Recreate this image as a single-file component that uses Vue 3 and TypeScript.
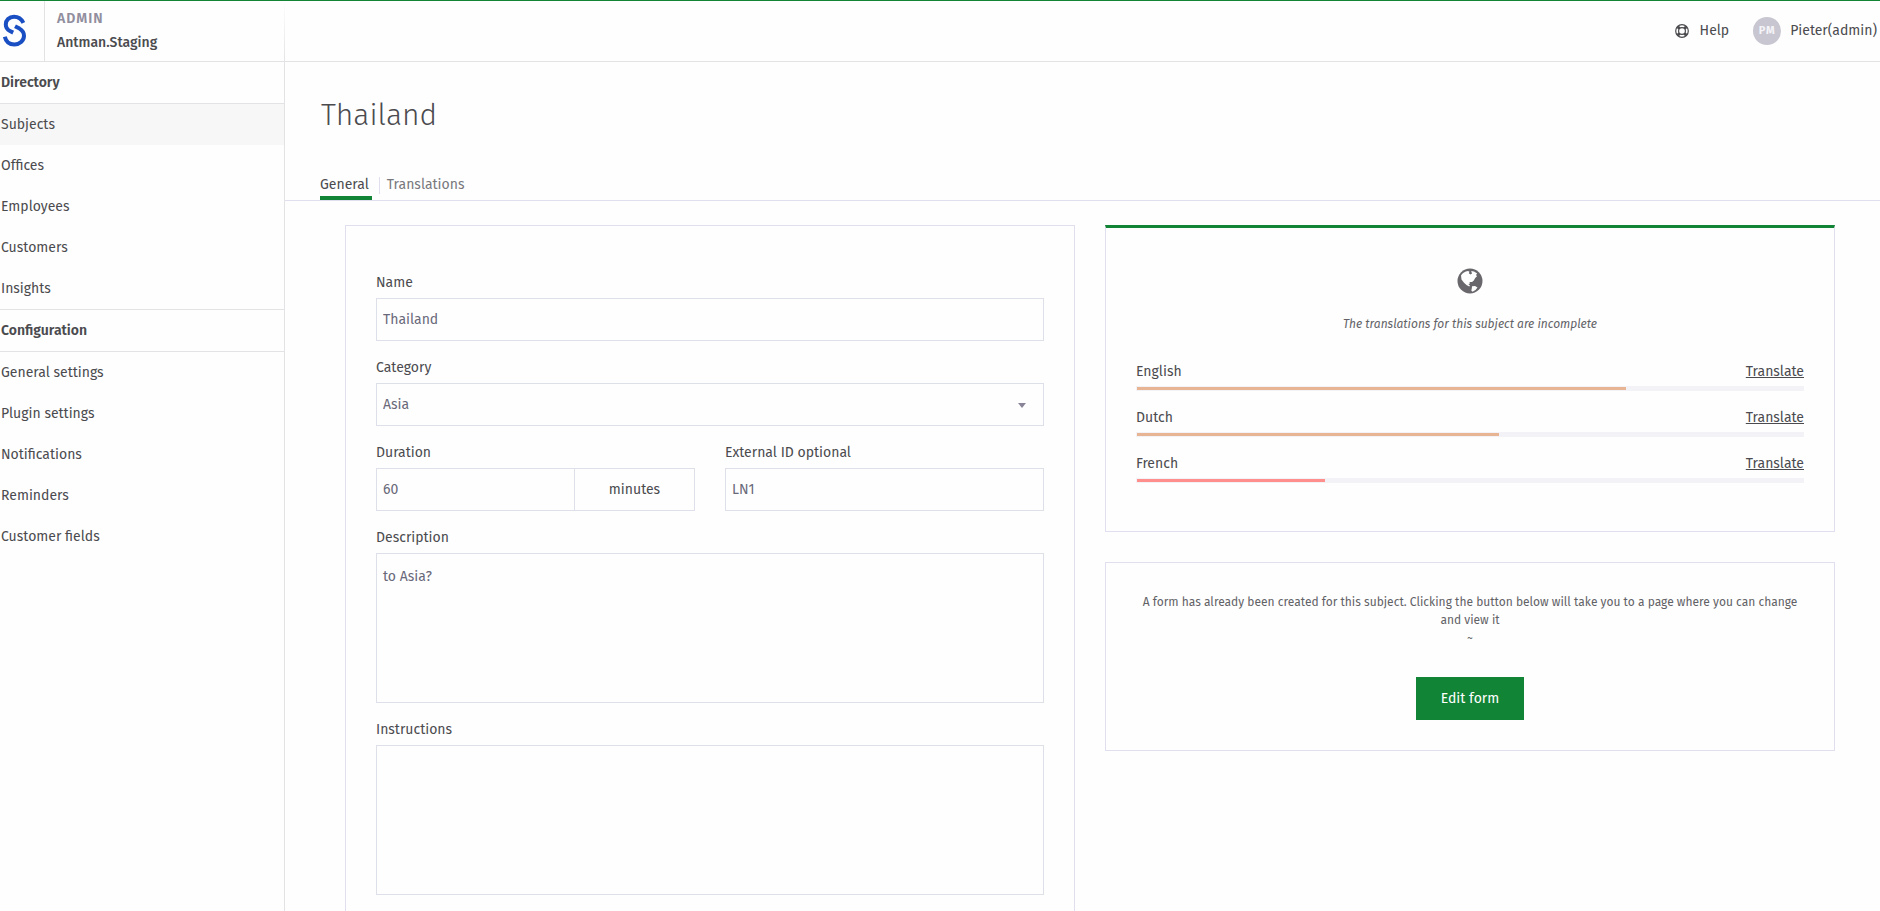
<script setup lang="ts">
import { ref } from 'vue'

interface Section {
  title: string
  items: string[]
}
interface Language {
  name: string
  progress: number
  level: 'medium' | 'low'
}

const sections: Section[] = [
  { title: 'Directory', items: ['Subjects', 'Offices', 'Employees', 'Customers', 'Insights'] },
  {
    title: 'Configuration',
    items: ['General settings', 'Plugin settings', 'Notifications', 'Reminders', 'Customer fields'],
  },
]
const languages: Language[] = [
  { name: 'English', progress: 73.4, level: 'medium' },
  { name: 'Dutch', progress: 54.4, level: 'medium' },
  { name: 'French', progress: 28.3, level: 'low' },
]

const active = ref('Subjects')
const name = ref('Thailand')
const category = ref('Asia')
const duration = ref('60')
const externalId = ref('LN1')
const description = ref('to Asia?')
const instructions = ref('')
</script>

<template>
  <div class="app">
    <header class="topbar">
      <div class="brand">
        <a href="#" class="logo" aria-label="Home">
          <svg width="28" height="34" viewBox="0 0 28 34" fill="none" stroke="#1a4fc4" stroke-width="4">
            <path d="M23.400 8.800C21.500 5 18 2.700 14 2.700C9 2.700 5.800 6.200 5.800 10.400C5.800 13.400 7.400 15.600 10 17L13.200 18.600" />
            <path d="M15 12.200L19.500 14.600C22.700 16.500 24 18.800 24 21.800C24 26.800 19.600 30.500 14.300 30.500C9.600 30.500 6 27.800 4.800 22.800" />
          </svg>
        </a>
        <div class="account">
          <span class="role">ADMIN</span>
          <span class="company">Antman.Staging</span>
        </div>
      </div>
      <nav class="user-nav" aria-label="User">
        <a href="#" class="help">
          <svg width="14" height="14" viewBox="0 0 14 14" fill="none" stroke="#4b4b4f">
            <circle cx="7" cy="7" r="6.300" stroke-width="1.200" />
            <circle cx="7" cy="7" r="3.400" stroke-width="1.200" />
            <path d="M2.700 2.700L4.500 4.500M11.300 2.700L9.500 4.500M2.700 11.300L4.500 9.500M11.300 11.300L9.500 9.500" stroke-width="3" />
          </svg>
          Help
        </a>
        <a href="#" class="profile"><span class="avatar">PM</span>Pieter(admin)</a>
      </nav>
    </header>

    <div class="body">
      <nav class="sidebar" aria-label="Main">
        <section v-for="s in sections" :key="s.title" class="group">
          <h2>{{ s.title }}</h2>
          <a
            v-for="item in s.items"
            :key="item"
            href="#"
            :class="{ active: item === active }"
            @click.prevent="active = item"
            >{{ item }}</a
          >
        </section>
      </nav>

      <main class="main">
        <h1>Thailand</h1>
        <nav class="tabs" aria-label="Subject">
          <a href="#" class="tab current">General</a>
          <a href="#" class="tab">Translations</a>
        </nav>

        <div class="columns">
          <form class="card" @submit.prevent>
            <div class="field">
              <label for="name">Name</label>
              <input id="name" v-model="name" type="text" />
            </div>
            <div class="field">
              <label for="category">Category</label>
              <div class="select">
                <select id="category" v-model="category">
                  <option>Asia</option>
                </select>
                <svg class="caret" width="8" height="5" viewBox="0 0 8 5"><path d="M0 0H8L4 5Z" fill="#8a8499" /></svg>
              </div>
            </div>
            <div class="pair">
              <div class="field">
                <label for="duration">Duration</label>
                <div class="addon">
                  <input id="duration" v-model="duration" type="text" />
                  <span class="unit">minutes</span>
                </div>
              </div>
              <div class="field">
                <label for="external">External ID optional</label>
                <input id="external" v-model="externalId" type="text" />
              </div>
            </div>
            <div class="field">
              <label for="description">Description</label>
              <textarea id="description" v-model="description"></textarea>
            </div>
            <div class="field">
              <label for="instructions">Instructions</label>
              <textarea id="instructions" v-model="instructions"></textarea>
            </div>
          </form>

          <div class="side">
            <section class="card translations">
              <svg class="globe" width="26" height="26" viewBox="0 0 26 26">
                <circle cx="13" cy="13" r="12.500" fill="#69676c" />
                <path
                  d="M4 7.500C5.500 5 8 3.300 11 3L12.500 3.800L11.800 5.200L13.500 6.600L15 5.400L14.200 3L17 3.600L20.200 5.600L19 7L20 8.300L18.200 10L16.800 12.500L15 14L12.600 14L12.800 15.800L11.300 16L13 17.600L12.200 18.500L9.500 17L7 14.800L4.500 11.500Z"
                  fill="#fefefe"
                />
                <path d="M15 18.300L18 17.900L20.500 19.500L18.500 22L15.500 23.800L14.300 22.500L14.800 20.500Z" fill="#fefefe" />
              </svg>
              <p class="notice">The translations for this subject are incomplete</p>
              <ul>
                <li v-for="l in languages" :key="l.name">
                  <div class="row">
                    <span :id="'lang-' + l.name">{{ l.name }}</span>
                    <a href="#">Translate</a>
                  </div>
                  <div
                    class="track"
                    role="progressbar"
                    :aria-labelledby="'lang-' + l.name"
                    :aria-valuenow="l.progress"
                  >
                    <div class="fill" :class="l.level" :style="{ width: l.progress + '%' }"></div>
                  </div>
                </li>
              </ul>
            </section>

            <section class="card form-link">
              <p>
                A form has already been created for this subject. Clicking the button below will take you to a page
                where you can change and view it<br />~
              </p>
              <button type="button">Edit form</button>
            </section>
          </div>
        </div>
      </main>
    </div>
  </div>
</template>

<style>
body {
  background: #fefefe;
}
</style>

<style scoped>
.app,
.app * {
  box-sizing: border-box;
}
.app {
  height: 100vh;
  overflow: hidden;
  display: flex;
  flex-direction: column;
  border-top: 1px solid #118436;
  background: #fefefe;
  color: #4b4b4f;
  font: 14px/20px 'Fira Sans', 'Noto Sans', sans-serif;
}
a {
  color: inherit;
  text-decoration: none;
}
h1,
h2,
p,
ul {
  margin: 0;
  padding: 0;
}
.topbar {
  flex: none;
  display: flex;
  justify-content: space-between;
  height: 61px;
  border-bottom: 1px solid #e3e3e5;
}
.brand {
  display: flex;
  width: 285px;
  border-right: 1px solid;
  border-image: linear-gradient(#fefefe, #e3e3e5) 1;
}
.logo {
  display: flex;
  align-items: center;
  width: 45px;
  border-right: 1px solid #e3e3e5;
}
.logo svg {
  display: block;
}
.account {
  display: flex;
  flex-direction: column;
  justify-content: center;
  gap: 4px;
  padding-left: 12px;
}
.role {
  font-weight: 600;
  letter-spacing: 1px;
  color: #918e9e;
}
.company {
  font-weight: 500;
}
.user-nav {
  display: flex;
  align-items: center;
  gap: 24px;
  padding-right: 3px;
}
.help {
  display: flex;
  align-items: center;
  gap: 11px;
}
.profile {
  display: flex;
  align-items: center;
  gap: 9px;
}
.avatar {
  width: 28px;
  height: 28px;
  border-radius: 50%;
  background: #c8c6d0;
  color: #f4f4f8;
  font-size: 11px;
  font-weight: 700;
  letter-spacing: 1px;
  line-height: 28px;
  text-align: center;
}
.body {
  flex: 1;
  min-height: 0;
  display: flex;
}
.sidebar {
  flex: none;
  width: 285px;
  border-right: 1px solid #e3e3e5;
}
.group h2 {
  padding-left: 1px;
  border-bottom: 1px solid #e3e3e5;
  font-size: 14px;
  font-weight: 600;
  line-height: 41px;
}
.group + .group {
  border-top: 1px solid #e3e3e5;
}
.group a {
  display: block;
  padding-left: 1px;
  line-height: 41px;
}
.group a.active {
  background: #f7f7f7;
}
.main {
  flex: 1;
  min-width: 0;
}
h1 {
  padding: 32px 36px 0;
  font-size: 30px;
  font-weight: 300;
  line-height: 42px;
}
.tabs {
  display: flex;
  align-items: flex-end;
  padding: 39px 35px 0;
  border-bottom: 1px solid #dfdff0;
}
.tab {
  padding-bottom: 1px;
  border-bottom: 4px solid transparent;
  color: #78787c;
}
.tab.current {
  padding-right: 3px;
  border-bottom-color: #118436;
  color: #4b4b4f;
}
.tab + .tab {
  margin-left: 7px;
  display: flex;
  align-items: center;
}
.tab + .tab::before {
  content: '';
  height: 17px;
  margin-right: 7px;
  border-left: 1px solid #dfdff0;
}
.columns {
  display: grid;
  grid-template-columns: 1fr 1fr;
  align-items: start;
  gap: 30px;
  padding: 24px 45px 30px 60px;
}
.card {
  border: 1px solid #dfdff0;
  padding: 30px;
}
.field {
  padding-top: 17px;
}
.field label {
  display: block;
  margin-bottom: 5px;
}
.pair {
  display: grid;
  grid-template-columns: 1fr 1fr;
  gap: 30px;
}
input,
select,
textarea {
  display: block;
  width: 100%;
  height: 43px;
  margin: 0;
  padding: 0 6px;
  border: 1px solid #dde0e8;
  border-radius: 0;
  outline: 0;
  appearance: none;
  background: transparent;
  color: #69697a;
  font: inherit;
}
textarea {
  height: 150px;
  padding: 13px 6px;
  resize: none;
}
.select {
  position: relative;
}
.caret {
  position: absolute;
  top: 20px;
  right: 18px;
}
.addon {
  display: flex;
}
.addon input {
  flex: 1;
  min-width: 0;
}
.unit {
  width: 120px;
  border: 1px solid #dde0e8;
  border-left: 0;
  line-height: 41px;
  text-align: center;
}
.side {
  display: grid;
  gap: 30px;
}
.translations {
  padding-bottom: 31px;
  border-top: 3px solid #118436;
}
.globe {
  display: block;
  margin: 10px auto 21px;
}
.notice {
  margin-bottom: 29px;
  color: #626266;
  font-size: 12px;
  font-style: italic;
  line-height: 18px;
  text-align: center;
}
ul {
  list-style: none;
}
li {
  padding-bottom: 17px;
}
.row {
  display: flex;
  justify-content: space-between;
  margin-bottom: 4px;
}
.row a {
  text-decoration: underline;
}
.track {
  padding: 1px;
  background: #f2f2f7;
}
.fill {
  height: 3px;
}
.fill.medium {
  background: #e8b594;
}
.fill.low {
  background: #ff8f8c;
}
.form-link {
  color: #626266;
  font-size: 12px;
  line-height: 18px;
  text-align: center;
}
.form-link button {
  height: 43px;
  margin-top: 30px;
  padding: 0 25px;
  border: 0;
  background: #118436;
  color: #fff;
  font: inherit;
  font-size: 14px;
  display: inline-block;
  vertical-align: top;
}
</style>
